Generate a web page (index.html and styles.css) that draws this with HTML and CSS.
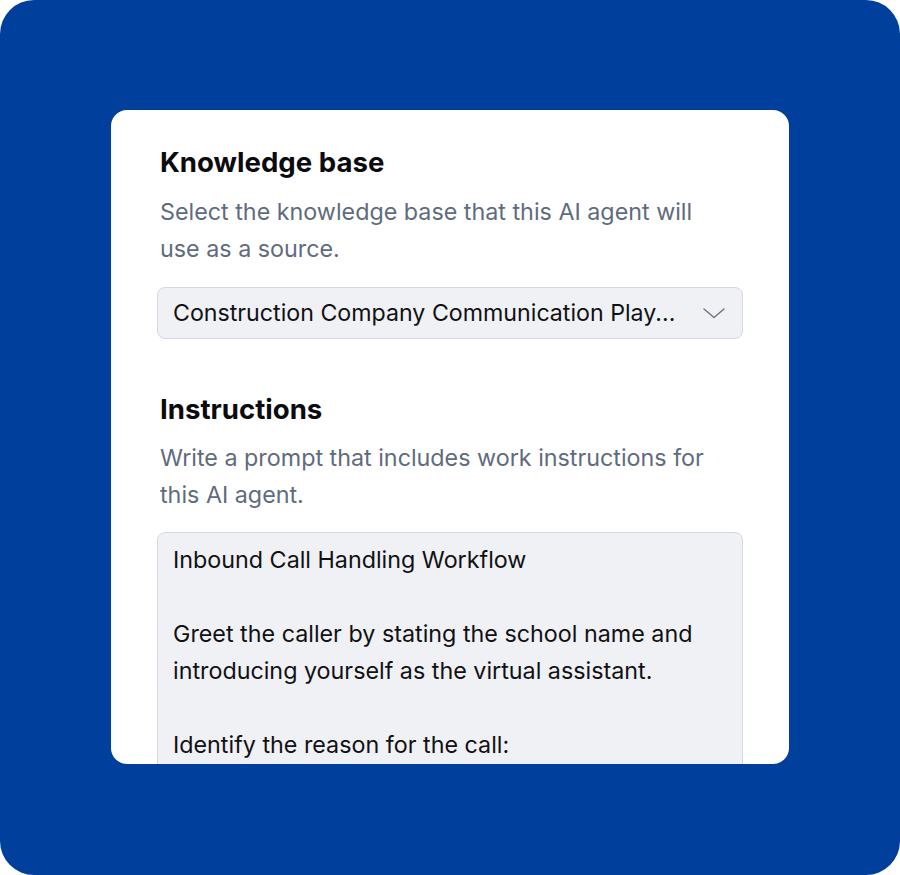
FILE: index.html
```html
<!DOCTYPE html>
<html>
<head>
<meta charset="utf-8">
<link rel="stylesheet" href="styles.css">
</head>
<body>
<div class="frame">
  <div class="card">
    <section class="field">
      <h2 class="title">Knowledge base</h2>
      <p class="desc">Select the knowledge base that this AI agent will use as a source.</p>
      <div class="select">
        <span class="select-text">Construction Company Communication Play...</span>
        <svg class="chev" width="22" height="11" viewBox="0 0 22 11"><path d="M1 1 L11 9.5 L21 1" fill="none" stroke="#6b7280" stroke-width="1.4" stroke-linecap="round" stroke-linejoin="round"/></svg>
      </div>
    </section>
    <section class="field second">
      <h2 class="title">Instructions</h2>
      <p class="desc desc2">Write a prompt that includes work instructions for this AI agent.</p>
      <div class="textarea">
        <p class="line">Inbound Call Handling Workflow</p>
        <p class="line">&nbsp;</p>
        <p class="line">Greet the caller by stating the school name and introducing yourself as the virtual assistant.</p>
        <p class="line">&nbsp;</p>
        <p class="line">Identify the reason for the call:</p>
      </div>
    </section>
  </div>
</div>
</body>
</html>
```
FILE: styles.css
```css
* { box-sizing: border-box; }
html, body { margin: 0; padding: 0; background: #ffffff; }
body { font-family: Inter, "Noto Sans", sans-serif; }
.frame {
  width: 900px;
  height: 875px;
  background: #003f9b;
  border-radius: 34px;
  padding: 110px 111px 0 111px;
  overflow: hidden;
}
.card {
  width: 678px;
  height: 654px;
  background: #ffffff;
  border-radius: 16px;
  overflow: hidden;
  padding: 34px 46px 0 46px;
}
.field { display: flex; flex-direction: column; }
.second { margin-top: 52px; }
.title {
  margin: 0;
  font-size: 27.6px;
  font-weight: 700;
  line-height: 36px;
  color: #0b0b0f;
  padding-left: 3px;
}
.desc {
  margin: 14px 0 0 0;
  font-size: 23.3px;
  line-height: 36.5px;
  color: #5f6b7e;
  padding-left: 3px;
  padding-right: 20px;
}
.desc2 { margin-top: 13px; }
.select {
  margin-top: 20px;
  height: 52px;
  background: #f0f1f5;
  border: 1px solid #d3d8e0;
  border-radius: 8px;
  display: flex;
  align-items: center;
  justify-content: space-between;
  padding: 0 17px 0 15px;
}
.select-text {
  font-size: 23.2px;
  color: #111114;
  white-space: nowrap;
}
.chev { display: block; }
.textarea {
  margin-top: 19px;
  background: #f0f1f5;
  border: 1px solid #d3d8e0;
  border-radius: 8px;
  padding: 8px 40px 20px 15px;
  height: 300px;
}
.line {
  margin: 0;
  font-size: 23.3px;
  line-height: 37px;
  color: #111114;
}
```
